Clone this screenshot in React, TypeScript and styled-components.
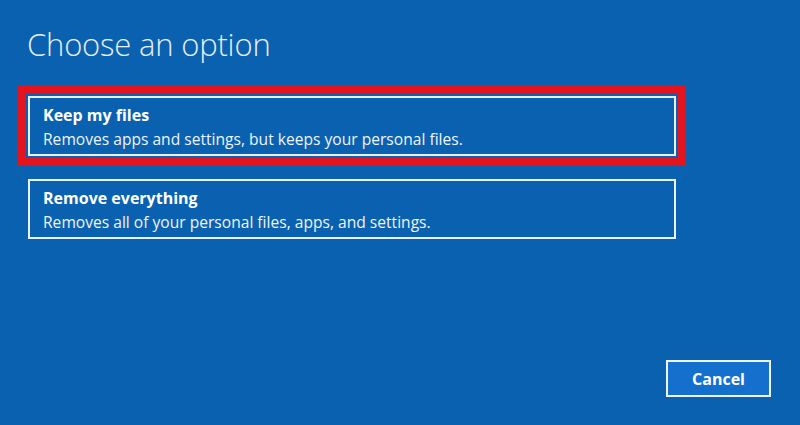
import React from 'react'
import styled, { createGlobalStyle } from 'styled-components'

const GlobalStyle = createGlobalStyle`
  html, body {
    margin: 0;
    padding: 0;
    background: #0a61b0;
  }
  #root {
    height: 100vh;
  }
`

interface OptionProps {
  title: string;
  text: string;
  selected?: boolean;
}

const options: OptionProps[] = [
  { title: 'Keep my files', text: 'Removes apps and settings, but keeps your personal files.', selected: true },
  { title: 'Remove everything', text: 'Removes all of your personal files, apps, and settings.' },
]

const Option: React.FC<OptionProps> = ({ title, text, selected }) => (
  <OptionBox $selected={!!selected}>
    <strong>{title}</strong>
    <span>{text}</span>
  </OptionBox>
)

const App: React.FC = () => {
  return (
    <>
      <GlobalStyle />
      <Page>
        <Title>Choose an option</Title>
        <OptionList>
          {options.map(o => <Option key={o.title} {...o} />)}
        </OptionList>
        <Footer>
          <CancelButton>Cancel</CancelButton>
        </Footer>
      </Page>
    </>
  )
}
export default App

const Page = styled.div`
  box-sizing: border-box;
  height: 100%;
  display: flex;
  flex-direction: column;
  padding: 0 29px 28px 28px;
  font-family: "Open Sans", "Noto Sans", sans-serif;
  color: #fff;
`

const Title = styled.h1`
  margin: 22px 0 0 -1px;
  font-size: 31px;
  font-weight: 300;
  line-height: 44px;
  color: #e6eef8;
  letter-spacing: -0.2px;
`

const OptionList = styled.div`
  display: flex;
  flex-direction: column;
  gap: 23px;
  margin-top: 30px;
  width: 648px;
`

const OptionBox = styled.div<{ $selected: boolean }>`
  box-sizing: border-box;
  height: 60px;
  border: 2px solid #e9f1fb;
  padding: 2px 13px 0;
  display: flex;
  flex-direction: column;
  justify-content: center;
  outline: ${props => props.$selected ? '8px solid #e4141f' : 'none'};
  outline-offset: 2px;

  strong {
    font-size: 16px;
    font-weight: 700;
    line-height: 23px;
  }
  span {
    font-size: 15.6px;
    line-height: 24px;
    color: #eef4fb;
  }
`

const Footer = styled.div`
  margin-top: auto;
  display: flex;
  justify-content: flex-end;
`

const CancelButton = styled.button`
  box-sizing: border-box;
  width: 105px;
  height: 37px;
  background: #1470cc;
  border: 2px solid #eef4fb;
  color: #fff;
  font-family: "Open Sans", "Noto Sans", sans-serif;
  font-size: 16px;
  font-weight: 700;
  cursor: pointer;
`
